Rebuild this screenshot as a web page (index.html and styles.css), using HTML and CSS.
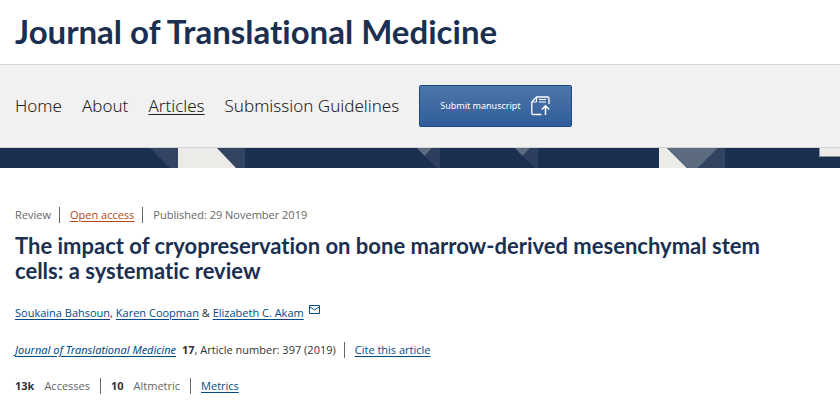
FILE: index.html
```html
<!DOCTYPE html>
<html lang="en">
<head>
<meta charset="utf-8">
<title>Journal of Translational Medicine</title>
<link rel="stylesheet" href="styles.css">
</head>
<body>
<header class="masthead">
  <p class="journal">Journal of Translational Medicine</p>
</header>
<nav class="nav" aria-label="Journal">
  <a href="#home">Home</a>
  <a href="#about">About</a>
  <a class="current" href="#articles">Articles</a>
  <a href="#guidelines">Submission Guidelines</a>
  <a class="submit" href="#submit">
    Submit manuscript
    <svg width="20" height="20" viewBox="0 0 20 20" fill="none" stroke="currentColor" aria-hidden="true">
      <path d="M10.5 18.5H2Q.8 18.500.8 17V6L5.500 1H16.500Q18 1 18 2.500V8" stroke-width="1.300"/>
      <path d="M1 6H5.500V1M8 3.500H15M8 6H15" stroke-width="1"/>
      <path d="M14.500 19V10M10.800 13.500L14.500 9.800L18.200 13.500" stroke-width="1.500"/>
    </svg>
  </a>
</nav>
<svg class="band" aria-hidden="true">
  <path fill="#334463" d="M150 0H178V20H170ZM217 0H245V20H236Z"/>
  <path fill="#ecebe7" d="M178 0H217L236 20H178Z"/>
  <path fill="#2d3e5e" d="M432 0H440V20H437L425 8ZM530 0H538V20H535L523 8Z"/>
  <path fill="#5c6b80" d="M417 0H432L424.500 8ZM515 0H530L522.500 8Z"/>
  <path fill="#ecebe7" d="M659 0H667L687 20H659Z"/>
  <path fill="#5c6b80" d="M667 0H718L698 20H687Z"/>
  <path fill="#334463" d="M718 0H725V20H698Z"/>
  <path fill="#8b929d" d="M819 0H880V9H819Z"/>
  <path fill="#ecebe7" d="M820 0H880V8H820Z"/>
</svg>
<main class="article">
  <ul class="meta">
    <li>Review</li>
    <li><a class="open" href="#open">Open access</a></li>
    <li>Published: 29 November 2019</li>
  </ul>
  <h1>The impact of cryopreservation on bone marrow-derived mesenchymal stem cells: a systematic review</h1>
  <p class="authors"><a href="#a1">Soukaina Bahsoun</a>, <a href="#a2">Karen Coopman</a> &amp; <a href="#a3">Elizabeth C. Akam</a><a class="mail" href="#mail" aria-label="Email Elizabeth C. Akam"><svg width="11" height="9" viewBox="0 0 11 9" fill="none" stroke="currentColor" aria-hidden="true"><path d="M.5.5H10.500V8.500H.5ZM1 2L5.500 5L10 2"/></svg></a></p>
  <ul class="meta source">
    <li><a href="#journal"><i>Journal of Translational Medicine</i></a><b class="volume">17</b>, Article number: 397 (2019)</li>
    <li><a href="#cite">Cite this article</a></li>
  </ul>
  <ul class="meta metrics">
    <li><b>13k</b>Accesses</li>
    <li><b>10</b>Altmetric</li>
    <li><a href="#metrics">Metrics</a></li>
  </ul>
</main>
</body>
</html>
```
FILE: styles.css
```css
* { box-sizing: border-box; }
body {
  margin: 0;
  background: #fff;
  color: #333;
  font: 11px/16px "Open Sans", "Noto Sans", sans-serif;
}
p, h1, ul { margin: 0; padding: 0; }
a { color: #004b83; text-underline-offset: 2px; }
i, b { font-family: "Noto Sans", "Open Sans", sans-serif; }
.masthead { padding: 11px 15px 13px; border-bottom: 1px solid #d5d5d5; }
.journal, h1 {
  color: #1b3051;
  font-family: Lato, sans-serif;
  font-weight: 700;
  font-variant-ligatures: none;
}
.journal { font-size: 33px; line-height: 40px; }
.nav {
  display: flex;
  align-items: center;
  gap: 20px;
  padding: 20px 15px;
  background: #f1f1f1;
  border-bottom: 1px solid #d5d5d5;
  font: 300 17px/24px "Noto Sans", "Open Sans", sans-serif;
}
.nav a { color: #222; text-decoration: none; }
.nav .current { text-decoration: underline; }
.nav .submit {
  display: flex;
  align-items: center;
  gap: 10px;
  padding: 8px 20px;
  border: 1px solid #174e8a;
  border-radius: 2px;
  background: linear-gradient(#4d76a9, #305d9a);
  color: #fff;
  font: 9px/24px "Noto Sans", "Open Sans", sans-serif;
}
.band { display: block; width: 100%; height: 20px; background: #1b3051; }
.article { padding: 39px 15px 18px; }
.meta { display: flex; flex-wrap: wrap; list-style: none; color: #666; }
.meta li + li { margin-left: 8px; padding-left: 10px; border-left: 1px solid #666; }
.meta .open { color: #b74616; }
h1 {
  max-width: 760px;
  margin: 10px 0 22px;
  font-size: 22px;
  line-height: 25px;
}
.authors { margin-bottom: 21px; }
.mail { margin-left: 5px; }
.mail svg { vertical-align: 3px; }
.meta.source { color: #333; margin-bottom: 20px; }
.volume { margin-left: 6px; }
.metrics b { margin-right: 10px; color: #333; }
.metrics li + li { margin-left: 10px; }
```
